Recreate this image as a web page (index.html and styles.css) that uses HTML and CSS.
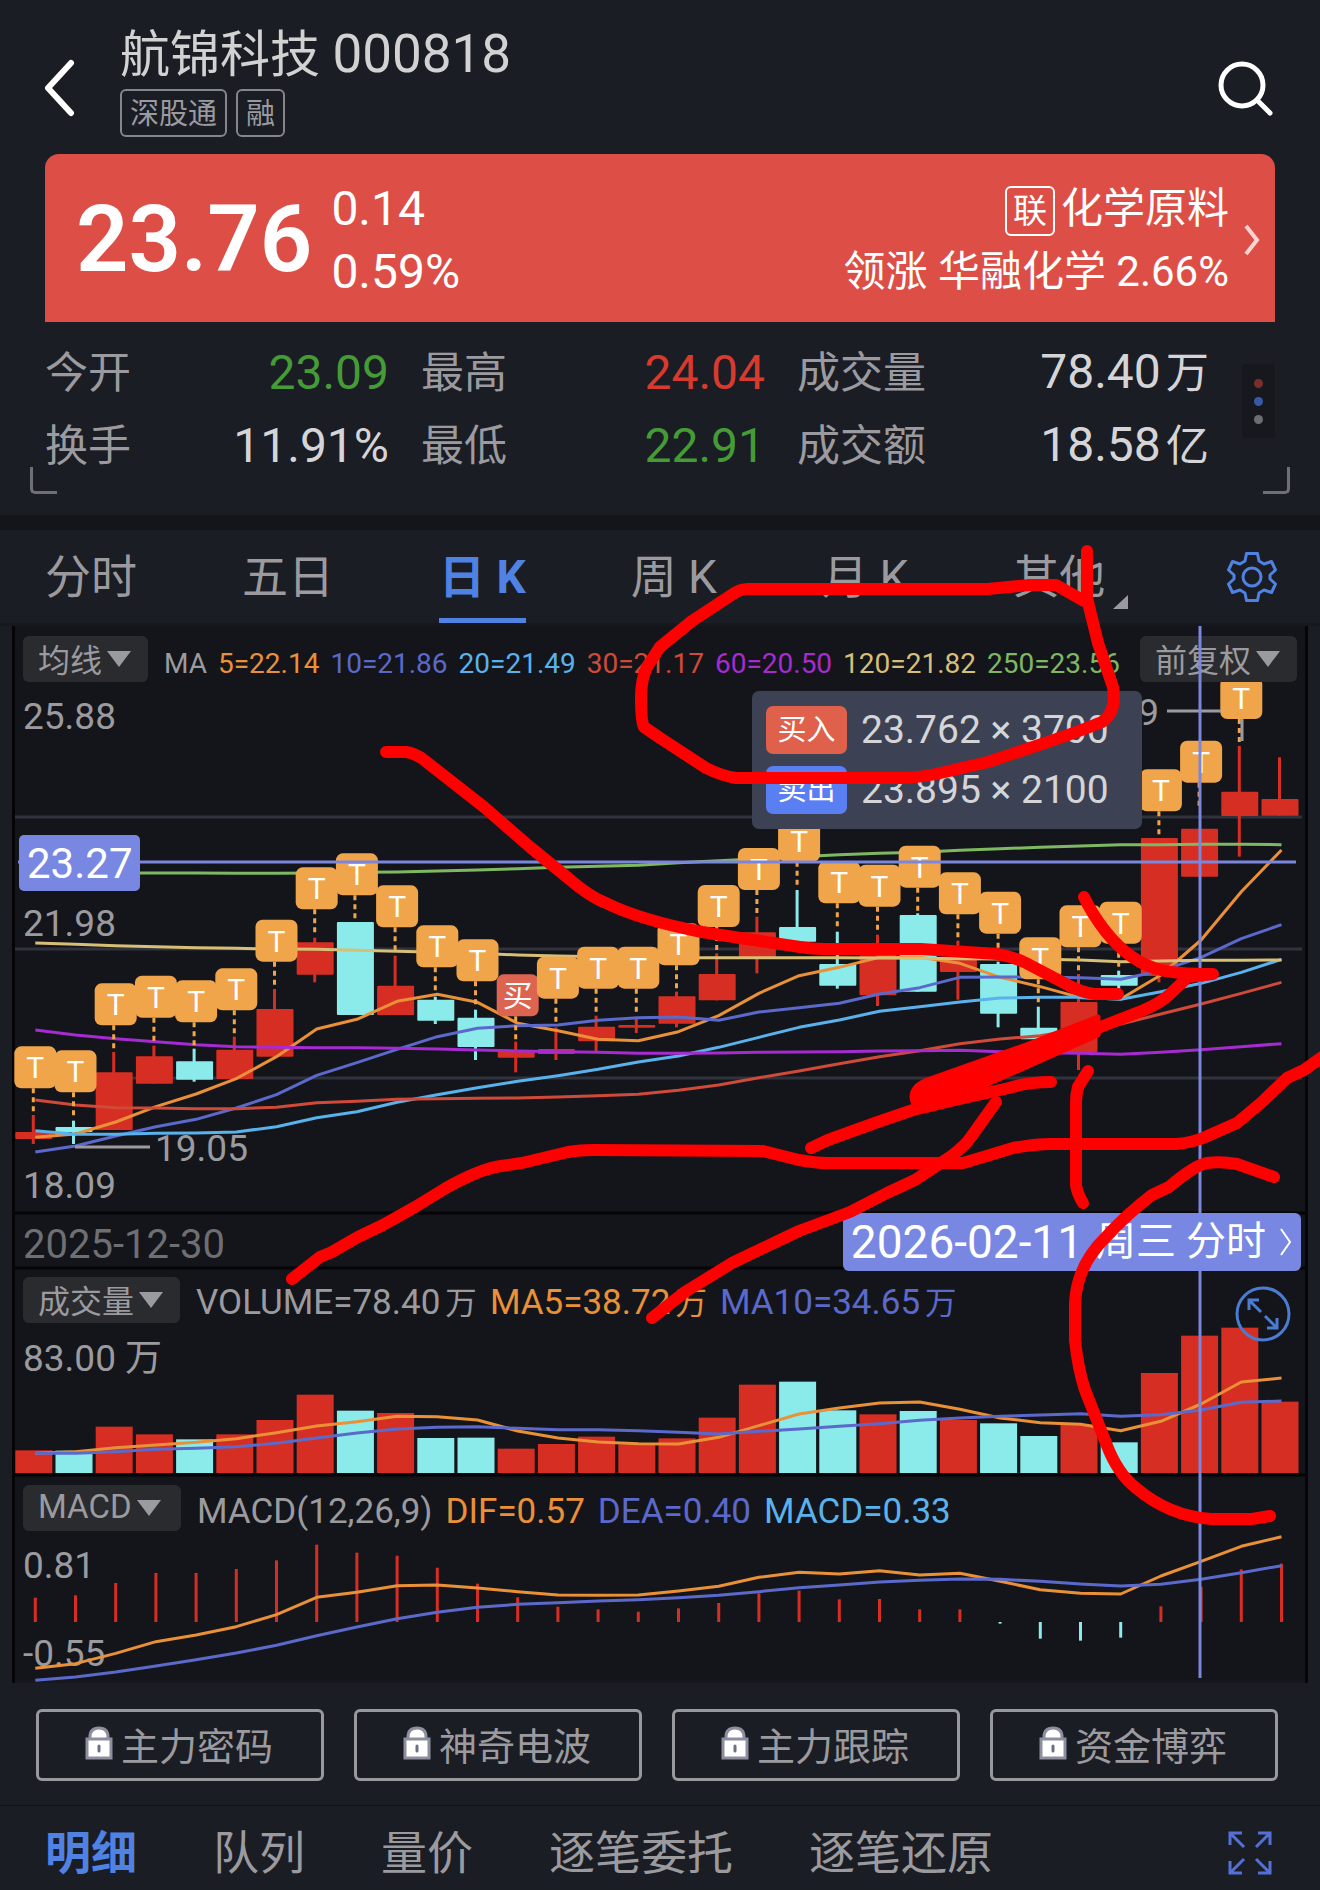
FILE: index.html
```html
<!DOCTYPE html>
<html lang="zh-CN">
<head>
    <meta charset="UTF-8">
    <meta name="viewport" content="width=device-width, initial-scale=1.0">
    <title>航锦科技 000818</title>
    <link rel="stylesheet" href="styles.css">
</head>
<body>
    <!-- Title bar -->
    <header class="header">
        <button class="icon-btn back" aria-label="返回">
            <svg width="34" height="60" viewBox="0 0 34 60"><path d="M29 6 L6 31 L29 56" /></svg>
        </button>
        <div class="title">
            <h1>航锦科技 <span>000818</span></h1>
            <div class="tags"><span>深股通</span><span>融</span></div>
        </div>
        <button class="icon-btn search" aria-label="搜索">
            <svg width="60" height="60" viewBox="0 0 60 60"><circle cx="26" cy="28" r="21" /><path d="M41 43 L54 56" /></svg>
        </button>
    </header>

    <!-- Price banner -->
    <a href="#sector" class="banner">
        <strong class="price">23.76</strong>
        <span class="change"><span>0.14</span><span>0.59%</span></span>
        <span class="sector">
            <span><b>联</b>化学原料</span>
            <span>领涨 华融化学 2.66%</span>
        </span>
        <svg class="arrow" width="18" height="36" viewBox="0 0 18 36"><path d="M3 4 L14 18 L3 32" /></svg>
    </a>

    <section class="stats">
        <dl>
            <div><dt>今开</dt><dd class="green">23.09</dd></div>
            <div><dt>最高</dt><dd class="red">24.04</dd></div>
            <div><dt>成交量</dt><dd>78.40<span class="unit">万</span></dd></div>
            <div><dt>换手</dt><dd>11.91%</dd></div>
            <div><dt>最低</dt><dd class="green">22.91</dd></div>
            <div><dt>成交额</dt><dd>18.58<span class="unit">亿</span></dd></div>
        </dl>
        <button class="dots" aria-label="更多"><i></i><i></i><i></i></button>
    </section>

    <!-- Period tabs -->
    <nav class="tabs">
        <a href="#min">分时</a>
        <a href="#5d">五日</a>
        <a href="#day" class="active">日 K</a>
        <a href="#week">周 K</a>
        <a href="#month">月 K</a>
        <a href="#more" class="more">其他</a>
        <button class="icon-btn gear" aria-label="设置">
            <svg width="52" height="52" viewBox="0 0 52 52">
                <path d="M20.500 2.500 H31.500 L33 10 L38 13 L45.500 10.500 L49.500 19 L44 24 V28 L49.500 33 L45.500 41.500 L38 39 L33 42 L31.500 49.500 H20.500 L19 42 L14 39 L6.500 41.500 L2.500 33 L8 28 V24 L2.500 19 L6.500 10.500 L14 13 L19 10 Z" />
                <circle cx="26" cy="26" r="9" />
            </svg>
        </button>
    </nav>

    <!-- Charts -->
    <main class="chart">
        <svg class="canvas" id="canvas" viewBox="0 0 1320 1060"></svg>

        <section class="panel panel-price">
            <div class="legend">
                <button class="pick">均线<i></i></button>
                <p class="ma">
                    <span>MA</span><span class="c5">5=22.14</span><span class="c10">10=21.86</span><span class="c20">20=21.49</span><span class="c30">30=21.17</span><span class="c60">60=20.50</span><span class="c120">120=21.82</span><span class="c250">250=23.56</span>
                </p>
                <button class="pick adjust">前复权<i></i></button>
            </div>
        </section>

        <section class="dates">
            <span>2025-12-30</span>
            <a href="#min" class="date-tag">2026-02-11 <small>周三 分时</small>
                <svg width="14" height="32" viewBox="0 0 14 32"><path d="M2 3 L11 16 L2 29" /></svg>
            </a>
        </section>

        <section class="panel panel-volume">
            <div class="legend">
                <button class="pick">成交量<i></i></button>
                <p><span>VOLUME=78.40<span class="unit">万</span></span><span class="c5">MA5=38.72<span class="unit">万</span></span><span class="c10">MA10=34.65<span class="unit">万</span></span></p>
            </div>
            <button class="icon-btn expand" aria-label="放大">
                <svg width="56" height="56" viewBox="0 0 56 56">
                    <circle cx="28" cy="28" r="26" />
                    <path d="M26 26 L14 14 M14 24 V14 H24 M30 30 L42 42 M42 32 V42 H32" />
                </svg>
            </button>
        </section>

        <section class="panel panel-macd">
            <div class="legend">
                <button class="pick">MACD<i></i></button>
                <p><span>MACD(12,26,9)</span><span class="c5">DIF=0.57</span><span class="c10">DEA=0.40</span><span class="c20">MACD=0.33</span></p>
            </div>
        </section>

        <svg class="crosshair" viewBox="0 0 1320 1060">
            <path d="M18 239 H1296 M1200 3 V1055" />
            <rect x="19" y="212" width="121" height="56" rx="5" />
            <text x="27" y="255">23.27</text>
        </svg>

        <div class="tooltip">
            <div><b class="buy">买入</b>23.762 × 3700</div>
            <div><b class="sell">卖出</b>23.895 × 2100</div>
        </div>
    </main>

    <!-- Locked indicators -->
    <div class="locked">
        <button><svg width="28" height="34" viewBox="0 0 28 34"><use href="#lock" /></svg>主力密码</button>
        <button><svg width="28" height="34" viewBox="0 0 28 34"><use href="#lock" /></svg>神奇电波</button>
        <button><svg width="28" height="34" viewBox="0 0 28 34"><use href="#lock" /></svg>主力跟踪</button>
        <button><svg width="28" height="34" viewBox="0 0 28 34"><use href="#lock" /></svg>资金博弈</button>
    </div>

    <nav class="bottom">
        <a href="#detail" class="active">明细</a>
        <a href="#queue">队列</a>
        <a href="#volprice">量价</a>
        <a href="#orders">逐笔委托</a>
        <a href="#replay">逐笔还原</a>
        <button class="icon-btn full" aria-label="全屏">
            <svg width="44" height="44" viewBox="0 0 44 44">
                <path d="M16 16 L2 2 M2 14 V2 H14 M28 16 L42 2 M30 2 H42 V14 M16 28 L2 42 M2 30 V42 H14 M28 28 L42 42 M42 30 V42 H30" />
            </svg>
        </button>
    </nav>

    <!-- Hand-drawn marks -->
    <svg class="marks" viewBox="0 0 1320 1890">
        <path d="M1087 551 L1087 598 L1098 643 L1113 687 Q1117 712 1102 722 Q1070 735 1030 748 L988 762 L945 772 Q920 778 900 778 L736 778 Q722 776 706 768 L660 738 L644 727 Q641 722 641 697 Q641 680 647 667 L660 647 L692 621 L733 594 Q740 589 748 589 L988 589 L1030 585 L1056 585 L1084 601" />
        <path d="M386 752 L406 752 Q415 753 424 760 L484 807 L530 847 L568 878 Q590 897 606 903 Q640 920 702 932 L740 938 L800 947 Q812 949 824 949 L921 949 L997 954 Q1014 957 1026 963 L1064 983 Q1080 992 1094 994 L1118 994" />
        <path d="M1084 897 Q1092 914 1106 932 Q1131 963 1161 970 Q1175 974 1213 974 L1188 977 L1169 995 Q1160 1003 1144 1010 L1098 1028" />
        <path class="wedge" d="M1098 1017 L1026 1045 L927 1080 Q912 1086 912 1097 Q913 1109 928 1110 L963 1095 L1098 1035 Z" />
        <path d="M811 1148 L828 1140 L875 1123 L913 1110 L955 1100 L1009 1088 Q1028 1082 1051 1082" />
        <path d="M292 1279 L320 1257 L332 1252 L358 1237 L383 1225 L415 1207 L446 1188 Q480 1169 501 1166 L522 1163 L568 1152 Q580 1150 593 1150 L763 1151 L799 1160 Q815 1163 828 1163 L963 1163 L980 1158 L1013 1148 Q1035 1144 1051 1144 L1176 1144 Q1190 1143 1203 1138 L1237 1123 L1262 1102 L1287 1078 L1304 1070 L1325 1055" />
        <path d="M996 1102 L971 1137 Q965 1146 950 1157 L915 1180 L887 1193 L850 1212 L799 1231 L732 1263 L685 1292 L652 1318" />
        <path d="M1088 1071 L1078 1087 Q1076 1094 1076 1103 L1076 1185 Q1077 1193 1083 1203" />
        <path d="M1274 1177 L1237 1164 Q1221 1161 1207 1163 Q1195 1165 1169 1187 L1152 1195 Q1127 1214 1106 1237 Q1077 1265 1075 1303 L1075 1340 Q1078 1369 1085 1390 L1106 1443 Q1117 1473 1136 1488 Q1169 1516 1211 1519 L1252 1519 L1270 1516" />
    </svg>

    <svg width="0" height="0" class="defs">
        <symbol id="lock" viewBox="0 0 28 34">
            <path d="M5 14 V11 Q5 2 14 2 Q23 2 23 11 V14" fill="#fff" stroke="#8d8f9e" stroke-width="3" />
            <rect x="2" y="13" width="24" height="19" fill="#fff" stroke="#8d8f9e" stroke-width="3" />
            <path d="M14 20 V25" stroke="#6d7080" stroke-width="3" stroke-linecap="round" />
        </symbol>
    </svg>
    <script src="chart.js"></script>
</body>
</html>
```
FILE: styles.css
```css
* {
    box-sizing: border-box;
}
body {
    margin: 0;
    position: relative;
    overflow-x: hidden;
    background-color: #1b1d25;
    color: #9b9b9f;
    font-family: Roboto, "Noto Sans CJK SC", sans-serif;
}
a {
    color: inherit;
    text-decoration: none;
}
button {
    font-family: inherit;
    color: inherit;
    cursor: pointer;
}
svg {
    display: block;
    fill: none;
}
h1, p, dl, dd {
    margin: 0;
}
.icon-btn {
    padding: 0;
    border: none;
    background: none;
}
.defs {
    position: absolute;
}
.unit {
    margin-left: 5px;
    font-size: 90%;
}

/* Title bar */
.header {
    display: flex;
    align-items: flex-start;
    padding: 23px 44px 17px 42px;
}
.back, .search {
    margin-top: 34px;
    stroke: #fff;
    stroke-width: 6;
    stroke-linecap: round;
    stroke-linejoin: round;
}
.search {
    margin-left: auto;
    stroke-width: 5;
}
.title {
    margin-left: 44px;
}
.title h1 {
    height: 60px;
    font-size: 50px;
    line-height: 62px;
    font-weight: 400;
    color: #d2d2d2;
}
.title h1 span {
    font-size: 53px;
}
.tags {
    display: flex;
    gap: 9px;
    margin-top: 6px;
}
.tags span {
    height: 48px;
    padding: 0 8px;
    border: 2px solid #85868b;
    border-radius: 6px;
    font-size: 29px;
    line-height: 47px;
}

/* Price banner */
.banner {
    display: flex;
    align-items: center;
    height: 168px;
    margin: 0 45px;
    padding: 3px 14px 0 31px;
    border-radius: 14px 14px 0 0;
    background-color: #dd4e46;
    color: #fff;
}
.price {
    font-size: 92px;
    font-weight: 600;
}
.change {
    display: flex;
    flex-direction: column;
    margin-left: 19px;
    font-size: 48px;
    line-height: 63px;
}
.sector {
    display: flex;
    flex-direction: column;
    align-items: flex-end;
    margin-left: auto;
    font-size: 42px;
    line-height: 63px;
}
.sector b {
    display: inline-block;
    margin-right: 6px;
    padding: 0 6px;
    border: 2px solid #fff;
    border-radius: 6px;
    font-size: 34px;
    line-height: 46px;
    font-weight: 400;
    vertical-align: middle;
}
.arrow {
    margin-left: 14px;
    stroke: #fbd5d2;
    stroke-width: 4;
}

/* Open, high, low... */
.stats {
    position: relative;
    display: flex;
    align-items: flex-start;
    gap: 33px;
    padding: 14px 45px 33px;
    border-bottom: 15px solid #14151a;
}
.stats dl {
    flex: 1;
    display: grid;
    grid-template-columns: 344fr 344fr 412fr;
    grid-auto-rows: 73px;
    column-gap: 32px;
}
.stats dl div {
    display: flex;
    justify-content: space-between;
    align-items: center;
    line-height: 72px;
}
.stats dt {
    font-size: 43px;
}
.stats dd {
    font-size: 48px;
    color: #d5d5d8;
}
.stats .green {
    color: #459b35;
}
.stats .red {
    color: #d93a2e;
}
.stats::before, .stats::after {
    content: "";
    position: absolute;
    bottom: 21px;
    width: 24px;
    height: 24px;
    border: solid #6f7076;
}
.stats::before {
    left: 30px;
    border-width: 0 0 3px 3px;
    border-radius: 0 0 0 5px;
}
.stats::after {
    right: 30px;
    border-width: 0 3px 3px 0;
    border-radius: 0 0 5px 0;
}
.dots {
    display: flex;
    flex-direction: column;
    align-items: center;
    justify-content: center;
    gap: 9px;
    width: 33px;
    height: 74px;
    margin-top: 28px;
    padding: 0;
    border: none;
    border-radius: 4px;
    background-color: #17181d;
}
.dots i {
    width: 9px;
    height: 9px;
    border-radius: 50%;
    background-color: #7a2f2c;
}
.dots i:nth-child(2) {
    background-color: #3659a6;
}
.dots i:nth-child(3) {
    background-color: #6c6d70;
}

/* Period tabs */
.tabs {
    display: flex;
    gap: 105px;
    height: 93px;
    padding: 0 42px 0 45px;
    font-size: 46px;
    line-height: 95px;
    white-space: nowrap;
}
.active {
    color: #4f82e2;
    font-weight: 700;
}
.tabs .active {
    box-shadow: inset 0 -5px #4f82e2;
}
.more {
    position: relative;
}
.more::after {
    content: "";
    position: absolute;
    right: -23px;
    bottom: 14px;
    border: solid transparent;
    border-width: 0 0 14px 15px;
    border-bottom-color: #9b9b9f;
}
.gear {
    margin-left: auto;
    stroke: #4f82e2;
    stroke-width: 3;
    stroke-linejoin: round;
}

/* Charts */
.chart {
    position: relative;
    border-top: 3px solid #17181d;
    border-bottom: 3px solid #17181d;
    height: 1060px;
    background-color: #14151a;
}
.canvas, .crosshair {
    position: absolute;
    top: -3px;
    left: 0;
    width: 100%;
    height: 1060px;
}
.panel {
    position: relative;
    padding: 10px 23px 0;
}
.panel-price {
    height: 587px;
}
.panel-volume {
    height: 208px;
}
.legend {
    display: flex;
    align-items: flex-end;
    gap: 16px;
}
.legend p {
    display: flex;
    gap: 13px;
    font-size: 35px;
    line-height: 38px;
    white-space: nowrap;
}
.legend .ma {
    gap: 11px;
    font-size: 28px;
    line-height: 36px;
}
.pick {
    display: flex;
    align-items: center;
    gap: 5px;
    height: 46px;
    padding: 0 17px 3px 15px;
    border: none;
    border-radius: 6px;
    background-color: #2a2b2f;
    font-size: 32px;
    white-space: nowrap;
}
.panel-macd .pick {
    min-width: 158px;
    font-size: 33px;
}
.pick i {
    margin-top: 3px;
    border: solid transparent;
    border-width: 16px 12px 0;
    border-top-color: #9b9b9f;
}
.adjust {
    margin-left: auto;
}
.c5 { color: #ea9138; }
.c10 { color: #5b69cb; }
.c20 { color: #5ab2ec; }
.c30 { color: #cf4a38; }
.c60 { color: #a62bd0; }
.c120 { color: #d8bf78; }
.c250 { color: #7fb862; }

.dates {
    display: flex;
    justify-content: space-between;
    align-items: flex-start;
    height: 54px;
    padding: 0 19px 0 23px;
    font-size: 40px;
    line-height: 64px;
    color: #6e6f73;
}
.date-tag {
    position: relative;
    z-index: 4;
    display: flex;
    align-items: center;
    gap: 13px;
    height: 58px;
    padding: 0 8px;
    border-radius: 6px;
    background-color: #7888e2;
    color: #fff;
    font-size: 46px;
}
.date-tag small {
    font-size: 40px;
}
.date-tag svg {
    stroke: #fff;
    stroke-width: 2;
}
.expand {
    position: absolute;
    right: 29px;
    top: 19px;
    z-index: 4;
    stroke: #4a7cd2;
    stroke-width: 3;
}
.crosshair {
    z-index: 3;
    pointer-events: none;
}
.crosshair path {
    stroke: #7b87dc;
    stroke-width: 3;
}
.crosshair rect {
    fill: #7888e2;
}
.crosshair text {
    fill: #fff;
    font-size: 42px;
}
.tooltip {
    position: absolute;
    right: 178px;
    top: 65px;
    z-index: 4;
    display: flex;
    flex-direction: column;
    gap: 12px;
    width: 390px;
    padding: 15px 14px;
    border-radius: 7px;
    background-color: #3d4154;
    color: #d5d5d8;
    font-size: 39px;
    line-height: 48px;
    white-space: nowrap;
}
.tooltip div {
    display: flex;
    gap: 14px;
}
.tooltip b {
    width: 81px;
    border-radius: 7px;
    color: #fff;
    font-size: 29px;
    font-weight: 400;
    text-align: center;
}
.buy {
    background-color: #df604b;
}
.sell {
    background-color: #5a7ff2;
}

/* Drawn by chart.js */
.grid { stroke: #30323d; stroke-width: 3; }
.frame { stroke: #050507; stroke-width: 3; }
.side { fill: #1b1d25; }
.axis { fill: #9b9b9f; font-size: 37px; }
.lead { stroke: #9b9b9f; stroke-width: 3; }
.up { fill: #d62e22; stroke: #d62e22; }
.down { fill: #8bebea; stroke: #8bebea; }
.wick { stroke-width: 3; }
.body { stroke: none; }
.line { stroke-width: 3; stroke: currentColor; stroke-linejoin: round; }
.stem { stroke: #f0a54a; stroke-width: 3; stroke-dasharray: 5 4; }
.badge { fill: #f0a54a; }
.badge.bought { fill: #dd6450; }
.badge-text { fill: #fff; font-size: 30px; text-anchor: middle; }

/* Locked indicators */
.locked {
    display: grid;
    grid-template-columns: repeat(4, 1fr);
    gap: 30px;
    padding: 26px 42px 24px 36px;
}
.locked button {
    display: flex;
    justify-content: center;
    align-items: center;
    gap: 8px;
    height: 72px;
    padding: 0 2px 4px 0;
    border: 3px solid #98999d;
    border-radius: 6px;
    background: none;
    font-size: 38px;
}

.bottom {
    display: flex;
    gap: 76px;
    padding: 13px 48px 0 45px;
    border-top: 1px solid #121318;
    font-size: 46px;
    line-height: 68px;
    white-space: nowrap;
}
.full {
    margin-left: auto;
    stroke: #5470d6;
    stroke-width: 3;
}

.marks {
    position: absolute;
    top: 0;
    left: 0;
    width: 100%;
    z-index: 10;
    pointer-events: none;
    stroke: #f00;
    stroke-width: 12;
    stroke-linecap: round;
    stroke-linejoin: round;
}
.wedge {
    fill: #f00;
    stroke-width: 5;
}
```
FILE: chart.js
```js
const canvas = document.getElementById('canvas');
const STEP = 40.2;
const FIRST = 35.3;

// each candle: up/down, body top, body bottom, high, low, badge top
const candles = [
    ['up', 876, 897, 825, 912, 619], ['down', 861, 876, 842, 912, 631],
    ['up', 697, 870, 636, 870, 430], ['up', 649, 731, 617, 731, 407],
    ['down', 664, 719, 626, 725, 421], ['up', 629, 717, 590, 717, 385],
    ['up', 507, 650, 447, 650, 239], ['up', 307, 404, 293, 427, 82],
    ['down', 246, 525, 246, 525, 40], ['up', 437, 525, 347, 525, 136],
    ['down', 479, 542, 470, 552, 256], ['down', 533, 621, 509, 660, 298],
    ['up', 635, 653, 605, 697, 403], ['up', 627, 642, 562, 660, 350],
    ['up', 560, 604, 527, 635, 320], ['up', 555, 563, 530, 579, 320],
    ['up', 469, 551, 455, 562, 250], ['up', 402, 481, 340, 481, 135],
    ['up', 277, 352, 230, 400, 24], ['down', 261, 305, 150, 305, -61],
    ['down', 372, 437, 275, 446, 64], ['up', 346, 466, 284, 498, 74],
    ['down', 225, 455, 220, 455, 17], ['up', 350, 396, 302, 479, 97],
    ['down', 372, 521, 365, 562, 155], ['down', 563, 598, 500, 598, 292],
    ['up', 486, 637, 402, 690, 196], ['down', 405, 437, 392, 446, 185],
    ['up', -6, 408, -6, 427, -212], ['up', -34, 110, -34, 110, -298],
    ['up', -145, -72, -282, 50, -489], ['up', -123, -73, -248, -73, null]
];

const averages = {
    c5: [892, 882, 846, 800, 762, 716, 650, 567, 538, 484, 463, 487, 550, 572, 598, 602, 575, 527, 460, 407, 382, 352, 352, 370, 412, 440, 473, 477, 405, 300, 155, 30],
    c10: [936, 918, 888, 860, 838, 804, 764, 706, 668, 628, 590, 565, 557, 555, 541, 533, 531, 541, 516, 503, 490, 462, 443, 412, 411, 411, 413, 418, 392, 352, 296, 254],
    c20: [872, 883, 883, 880, 879, 876, 860, 833, 815, 787, 764, 743, 724, 707, 688, 666, 648, 622, 592, 562, 540, 514, 500, 486, 474, 472, 472, 478, 455, 430, 397, 358],
    c30: [780, 795, 803, 804, 806, 806, 802, 788, 784, 778, 776, 775, 774, 771, 767, 763, 751, 735, 713, 693, 671, 650, 632, 611, 597, 587, 567, 552, 522, 492, 460, 427],
    c60: [570, 585, 596, 605, 614, 620, 622, 623, 623, 625, 627, 630, 633, 635, 637, 640, 640, 639, 637, 636, 635, 633, 632, 631, 635, 638, 640, 643, 637, 629, 620, 611],
    c120: [309, 313, 317, 320, 323, 325, 327, 328, 331, 334, 337, 340, 345, 348, 350, 352, 353, 353, 353, 353, 353, 354, 355, 356, 357, 358, 360, 365, 363, 361, 361, 360],
    c250: [99, 99, 99, 99, 99, 100, 100, 99, 97, 96, 93, 90, 86, 82, 79, 76, 68, 62, 56, 50, 44, 40, 37, 31, 26, 22, 18, 14, 14, 13, 13, 14]
};

const volumes = [721, 722, 650, 673, 688, 673, 630, 554, 602, 609, 684, 683, 716, 702, 680, 703, 685, 623, 524, 515, 601, 613, 603, 630, 640, 678, 645, 697, 489, 377, 353, 575];
const volumeAverages = {
    c5: [730, 725, 713, 705, 697, 686, 668, 648, 635, 619, 620, 630, 663, 684, 696, 701, 702, 682, 647, 612, 594, 579, 576, 598, 624, 638, 643, 662, 634, 582, 516, 504],
    c10: [730, 730, 725, 718, 715, 710, 700, 684, 669, 657, 652, 650, 655, 659, 659, 662, 667, 672, 664, 657, 649, 641, 631, 624, 619, 615, 611, 619, 614, 600, 577, 573]
};

const macd = [323, 316, 279, 249, 249, 237, 211, 164, 188, 197, 233, 281, 322, 350, 358, 365, 355, 339, 310, 302, 328, 327, 358, 358, 401, 446, 452, 443, 349, 290, 238, 221];
const macdLines = {
    c5: [535, 521, 490, 455, 435, 410, 374, 322, 307, 287, 285, 294, 305, 315, 316, 315, 303, 289, 262, 247, 252, 242, 255, 250, 274, 299, 310, 312, 258, 214, 169, 140],
    c10: [571, 561, 546, 528, 509, 489, 466, 437, 411, 386, 367, 352, 343, 338, 333, 329, 323, 316, 305, 293, 285, 276, 271, 267, 268, 274, 282, 288, 283, 268, 248, 227]
};

// three data steps make one unit of the drawing
const priceY = v => 217 + v / 3;
const volumeY = v => 587 + v / 3;
const macdY = v => 867 + v / 3;
const x = i => FIRST + i * STEP;

function add(tag, className, attrs, text) {
    const el = document.createElementNS('http://www.w3.org/2000/svg', tag);
    el.setAttribute('class', className);
    for (const key in attrs) el.setAttribute(key, attrs[key]);
    if (text) el.textContent = text;
    canvas.appendChild(el);
}

function drawLines(lines, y) {
    for (const name in lines) {
        const points = lines[name].map((v, i) => x(i) + ',' + y(v)).join(' ');
        add('polyline', 'line ' + name, { points });
    }
}

// Frame and grid
add('rect', 'side', { x: 0, y: 3, width: 13, height: 1057 });
add('rect', 'side', { x: 1307, y: 3, width: 13, height: 1057 });
add('path', 'frame', { d: 'M13.500 3 V1060 M1306.500 3 V1060 M15 590 H1305 M15 645 H1305 M15 852 H1305' });
add('path', 'grid', { d: 'M15 194 H1302 M15 326 H1302 M15 455 H1302' });

// Candles
candles.forEach(([dir, top, bottom, high, low], i) => {
    add('path', dir + ' wick', { d: `M${x(i) - 2} ${priceY(high)} V${priceY(low)}` });
    add('rect', dir + ' body', { x: x(i) - 20, y: priceY(top), width: 37, height: (bottom - top) / 3, rx: 1 });
});
drawLines(averages, priceY);

// Trade badges
candles.forEach(([dir, top, bottom, high, low, badge], i) => {
    if (badge === null) return;
    const y = priceY(badge);
    const bought = i === 12;
    add('path', 'stem', { d: `M${x(i) - 2} ${y + 42} V${y + 65}` });
    add('rect', 'badge' + (bought ? ' bought' : ''), { x: x(i) - 21, y, width: 42, height: 42, rx: 7 });
    add('text', 'badge-text', { x: x(i), y: y + 32 }, bought ? '买' : 'T');
});

// Volume
volumes.forEach((v, i) => {
    add('rect', candles[i][0] + ' body', { x: x(i) - 20, y: volumeY(v), width: 37, height: 850 - volumeY(v) });
});
drawLines(volumeAverages, volumeY);

// Axis labels
add('text', 'axis', { x: 23, y: 106 }, '25.88');
add('text', 'axis', { x: 23, y: 313 }, '21.98');
add('text', 'axis', { x: 23, y: 575 }, '18.09');
add('text', 'axis', { x: 155, y: 538 }, '19.05');
add('text', 'axis', { x: 1159, y: 102, 'text-anchor': 'end' }, '9');
add('path', 'lead', { d: 'M75 524 H150 M1167 88 H1221 M1242 96 V118' });
add('text', 'axis', { x: 23, y: 748 }, '83.00 万');
add('text', 'axis', { x: 23, y: 955 }, '0.81');
add('text', 'axis', { x: 23, y: 1043 }, '-0.55');

// MACD
macd.forEach((v, i) => {
    const dir = v > 396 ? 'down' : 'up';
    add('path', dir + ' wick', { d: `M${x(i)} 999 V${macdY(v)}` });
});
drawLines(macdLines, macdY);
```
